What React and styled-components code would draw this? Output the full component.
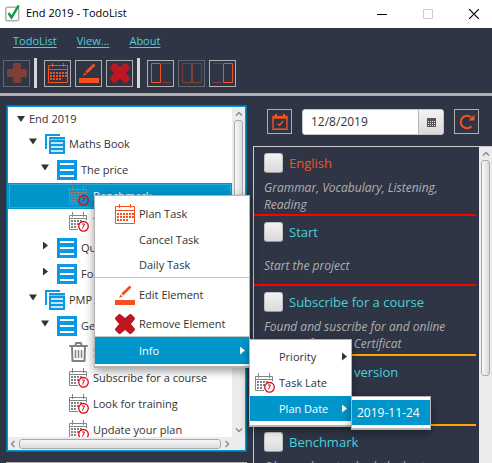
import React from 'react';
import styled, { createGlobalStyle, css } from 'styled-components';

const Global = createGlobalStyle`
  *, *::before, *::after { box-sizing: border-box; }
  body { margin: 0; overflow: hidden; }
  button { font: inherit; color: inherit; padding: 0; border: 0; background: none; }
`;

const navy = '#2f3545';
const blue = '#0096cb';
const cyan = '#48d1dc';
const orange = '#f4511e';
const grey = '#b0b0b0';

const Window = styled.div`
  position: relative;
  display: flex;
  flex-direction: column;
  height: 100vh;
  overflow: hidden;
  background: ${navy};
  color: #333;
  font: 11px/16px "Open Sans", "Noto Sans", sans-serif;
`;

const TitleBar = styled.header`
  display: flex;
  align-items: center;
  flex: none;
  height: 28px;
  padding-left: 4px;
  gap: 5px;
  background: #fff;
  color: #000;
`;

const Title = styled.h1`
  flex: 1;
  margin: 0;
  padding-bottom: 2px;
  font-size: 11px;
  font-weight: 400;
`;

const WindowButton = styled.button`
  display: grid;
  place-items: center;
  width: 41px;
  height: 24px;
  color: ${(p) => (p.disabled ? '#ccc' : '#000')};
  &:last-child { margin-right: -2px; }
`;

const MenuBar = styled.nav`
  display: flex;
  flex: none;
  align-items: center;
  gap: 20px;
  height: 26px;
  padding: 0 13px;
`;

const MenuLink = styled.a`
  color: ${cyan};
  text-underline-offset: 2px;
`;

const ToolBar = styled.div`
  display: flex;
  flex: none;
  align-items: center;
  gap: 4px;
  height: 42px;
  padding: 2px 3px 3px;
  border-bottom: 3px solid ${grey};
`;

const Divider = styled.span`
  width: 3px;
  height: 30px;
  margin-right: 3px;
  background: #d6d6d6;
`;

const IconButton = styled.button`
  display: grid;
  place-items: center;
  flex: none;
  width: ${(p) => p.$size || 27}px;
  height: ${(p) => p.$size || 27}px;
  border: 1px solid ${grey};
  &:disabled { opacity: 0.4; }
`;

const Body = styled.main`
  display: grid;
  grid-template-columns: minmax(0, 241fr) minmax(0, 239fr);
  column-gap: 6px;
  flex: 1;
  min-height: 0;
  padding: 9px 0 0 6px;
`;

const Left = styled.section`
  display: flex;
  flex-direction: column;
  gap: 10px;
  min-height: 0;
`;

const TreePanel = styled.div`
  display: grid;
  grid-template: minmax(0, 1fr) 13px / minmax(0, 1fr) 13px;
  flex: 1;
  min-height: 0;
  border: 1px solid ${blue};
  outline: 1px solid #0074a0;
  outline-offset: -1px;
  background: #fff;
  box-shadow: inset 0 0 0 1px #0396d8;
  padding: 1px;
`;

const DetailPanel = styled.div`
  flex: none;
  height: 1px;
  background: ${grey};
`;

const Tree = styled.ul`
  margin: 0;
  padding: 0;
  overflow: hidden;
  list-style: none;
`;

const TreeRow = styled.li`
  display: flex;
  align-items: center;
  gap: 4px;
  height: ${(p) => (p.$depth ? 26 : 24)}px;
  padding-left: ${(p) => 9 + p.$depth * 12}px;
  white-space: nowrap;
  ${(p) => p.$selected && css`
    background: ${blue};
    color: #fff;
    box-shadow: inset 0 0 0 1px #0096cb, inset 0 0 0 2px #2aa7d4;
  `}
`;

const Arrow = styled.span`
  width: 8px;
  height: 8px;
  margin-right: ${(p) => (p.$flush ? 0 : 4)}px;
  margin-bottom: ${(p) => (p.$flush ? 0 : 5)}px;
  background: ${(p) => (p.$hidden ? 'transparent' : 'currentColor')};
  clip-path: ${(p) => (p.$open ? 'polygon(0 12%, 100% 12%, 50% 88%)' : 'polygon(25% 0, 88% 50%, 25% 100%)')};
`;

const ScrollBar = styled.div`
  display: flex;
  flex-direction: ${(p) => (p.$horizontal ? 'row' : 'column')};
  align-items: center;
  gap: 2px;
  min-width: 0;
  min-height: 0;
  padding: ${(p) => (p.$horizontal ? '0 1px' : '3px 0')};
  background: #ececec;
  color: #888;
`;

const Thumb = styled.span`
  flex: ${(p) => p.$grow || 1};
  width: ${(p) => (p.$horizontal ? 'auto' : '9px')};
  height: ${(p) => (p.$horizontal ? '10px' : 'auto')};
  border: 1px solid #aaa;
  border-radius: 3px;
  background: linear-gradient(${(p) => (p.$horizontal ? '180deg' : '90deg')}, #f8f8f8, #dcdcdc);
`;

const Rest = styled.span`
  flex: ${(p) => p.$grow};
`;

const Corner = styled.span`
  background: #ececec;
`;

const Right = styled.section`
  display: flex;
  flex-direction: column;
  min-height: 0;
`;

const DateBar = styled.form`
  display: flex;
  flex: none;
  gap: 10px;
  height: 41px;
  padding: 4px 13px 0 14px;
`;

const DateField = styled.div`
  display: flex;
  flex: 1;
  min-width: 0;
  height: 26px;
  border: 1px solid #c4c4c4;
  border-radius: 3px;
  background: #fff;
  overflow: hidden;
`;

const DateInput = styled.input`
  flex: 1;
  min-width: 0;
  padding: 0 8px 1px;
  border: 0;
  outline: 0;
  background: none;
  color: #333;
  font: inherit;
  font-size: 12px;
`;

const DateButton = styled.button`
  display: grid;
  place-items: center;
  width: 25px;
  border-left: 1px solid #b5b5b5;
  background: linear-gradient(#f3f3f3, #dadada);
`;

const TaskPanel = styled.div`
  display: grid;
  grid-template-columns: minmax(0, 1fr) 13px;
  flex: 1;
  min-height: 0;
  border: solid #c8c8c8;
  border-width: 1px 0 0 1px;
`;

const Tasks = styled.ul`
  margin: 0;
  padding: 0 3px 0 0;
  overflow: hidden;
  list-style: none;
`;

const Task = styled.li`
  display: flex;
  flex-direction: column;
  height: 70px;
  padding: 6px 10px 0;
  border-bottom: 2px solid ${(p) => p.$line};
  &:first-child { height: 69px; }
`;

const TaskLabel = styled.label`
  display: flex;
  align-items: center;
  gap: 6px;
  color: ${(p) => (p.$hot ? orange : cyan)};
  font-size: 13px;
  line-height: 20px;
  white-space: nowrap;
`;

const Check = styled.input`
  appearance: none;
  flex: none;
  width: 19px;
  height: 20px;
  margin: 0;
  border: 1px solid #c2c2c2;
  border-bottom-color: #999;
  border-radius: 3px;
  background: linear-gradient(#f2f2f2, #dadada);
`;

const TaskText = styled.p`
  display: flex;
  align-items: center;
  flex: 1;
  margin: 0;
  padding-top: 4px;
  color: #b0b0b0;
  font-size: 12px;
  font-style: italic;
  line-height: 17px;
  white-space: pre-line;
`;

const Popup = styled.div`
  position: absolute;
  left: ${(p) => p.$x}px;
  top: ${(p) => p.$y}px;
  width: ${(p) => p.$w}px;
  padding: ${(p) => p.$pad || '4px 0'};
  border: 1px solid #b4b4b4;
  border-bottom-width: 2px;
  background: #fff;
  box-shadow: 0 3px 9px rgba(0, 0, 0, 0.4);
`;

const PopupItem = styled.button`
  display: grid;
  grid-template-columns: ${(p) => (p.$plain ? '1fr' : '20px 1fr 8px')};
  align-items: center;
  column-gap: 4px;
  width: 100%;
  height: ${(p) => p.$h || 25}px;
  padding: 0 3px 0 ${(p) => p.$inset}px;
  background: ${(p) => (p.$active ? blue : 'transparent')};
  color: ${(p) => (p.$active ? '#fff' : '#333')};
  font-size: ${(p) => (p.$plain ? 12 : 11)}px;
  text-align: left;
  white-space: nowrap;
`;

const Rule = styled.hr`
  margin: 0;
  height: 1px;
  border: 0;
  background: #c4c4c4;
`;

const days = [];
for (let r = 0; r < 3; r++) {
  for (let c = 0; c < 6; c++) {
    if (r < 2 || c < 4) days.push([2 + c * 3, 9 + r * 3]);
  }
}

const Calendar = ({ color = orange }) => (
  <svg width="20" height="20" viewBox="0 0 20 20" fill="none" stroke={color}>
    <path d="M.5 2.5h19v17H.5zM.5 6.5h19M4.5 0v4M15.5 0v4" />
    {days.map(([x, y]) => <rect key={`${x}-${y}`} x={x} y={y} width="2" height="2" fill={color} stroke="none" />)}
  </svg>
);

const LateCalendar = () => (
  <svg width="20" height="20" viewBox="0 0 20 20" fill="none" stroke="#858585">
    <path d="M9 17.5H.5v-14h17v5M.5 6.5h17M3.5 0v5M14.5 0v5" />
    {days.filter(([x, y]) => x + y < 23).map(([x, y]) => (
      <rect key={`${x}-${y}`} x={x} y={y - 1} width="2" height="2" fill="#858585" stroke="none" />
    ))}
    <circle cx="14.5" cy="14.3" r="4.8" stroke="#e30613" strokeWidth="1.3" />
    <path d="M13 12h2.5l-2 4.5" stroke="#e30613" />
  </svg>
);

const Pencil = () => (
  <svg width="20" height="20" viewBox="0 0 20 20" fill={orange}>
    <path d="M0 15h20v5H0zM14.5.4l2 2-8.2 8.2-2-2zM5.7 9.5l1.9 1.9L4 13z" />
  </svg>
);

const Cross = () => (
  <svg width="20" height="20" viewBox="0 0 20 20" fill="#be1622">
    <path d="M4.500 1.500L10 6l5.500-4.500 3 3L14 10l4.500 5.500-3 3L10 14l-5.500 4.500-3-3L6 10 1.500 4.500z" stroke="#be1622" strokeWidth="3" strokeLinejoin="round" />
  </svg>
);

const Plus = () => (
  <svg width="20" height="20" viewBox="0 0 20 20" fill={orange}>
    <path d="M7 0h6l1 1v5h5l1 1v6l-1 1h-5v5l-1 1H7l-1-1v-5H1l-1-1V7l1-1h5V1z" />
  </svg>
);

const Panes = ({ side }) => (
  <svg width="22" height="20" viewBox="0 0 22 20" fill="none" stroke={orange}>
    {side === 'left' && <><path d="M1.5.5h9v19h-9z" /><path d="M12 .5h9M12 19.5h9" opacity=".4" /></>}
    {side === 'both' && <path d="M1.5.5h9v19h-9zM11.5.5h9v19h-9z" />}
    {side === 'right' && <><path d="M11.5.5h9v19h-9z" /><path d="M1 .5h9M1 19.5h9" opacity=".4" /></>}
  </svg>
);

const Page = () => (
  <svg width="20" height="20" viewBox="0 0 20 20">
    <path d="M0 0h20v20H0z" fill="#0a9ae5" />
    <path d="M3 4h14M3 10h14M3 16h14" stroke="#fff" strokeWidth="2" />
  </svg>
);

const Book = () => (
  <svg width="20" height="20" viewBox="0 0 20 20">
    <path d="M0 0h15v2H2v13H0zM4 3h16v17H4z" fill="#0a9ae5" />
    <path d="M4 5.5h16" stroke="#7cc8f0" />
    <path d="M6 9h12M6 13h12M6 17h12" stroke="#fff" strokeWidth="1.4" />
  </svg>
);

const Bin = () => (
  <svg width="20" height="20" viewBox="0 0 20 20" fill="none" stroke="#808080" strokeWidth="2" strokeLinecap="round" strokeLinejoin="round">
    <path d="M1 4h17M6.5 3.5L7 1h5l.5 2.5M3 4.5L3.5 19h12L16 4.5" />
    <path d="M6.5 8.5v7M9.5 8.5v7M12.5 8.5v7" strokeWidth="1.5" />
  </svg>
);

const Chevron = ({ d }) => (
  <svg width="8" height="8" viewBox="0 0 8 8" fill="none" stroke="currentColor" strokeWidth="1.4"><path d={d} /></svg>
);
const UP = 'M1 5.5l3-3 3 3';
const DOWN = 'M1 2.5l3 3 3-3';
const LEFT = 'M5.5 1l-3 3 3 3';
const RIGHT = 'M2.5 1l3 3-3 3';

const icons = { book: Book, page: Page, late: LateCalendar, bin: Bin };

const rows = [
  { depth: 0, open: true, text: 'End 2019' },
  { depth: 1, open: true, icon: 'book', text: 'Maths Book' },
  { depth: 2, open: true, icon: 'page', text: 'The price' },
  { depth: 3, leaf: true, icon: 'late', text: 'Benchmark', selected: true },
  { depth: 3, leaf: true, icon: 'late', text: 'Test' },
  { depth: 2, icon: 'page', text: 'Questions' },
  { depth: 2, icon: 'page', text: 'Formulas' },
  { depth: 1, open: true, icon: 'book', text: 'PMP' },
  { depth: 2, open: true, icon: 'page', text: 'General' },
  { depth: 3, leaf: true, icon: 'bin', text: 'Start' },
  { depth: 3, leaf: true, icon: 'late', text: 'Subscribe for a course' },
  { depth: 3, leaf: true, icon: 'late', text: 'Look for training' },
  { depth: 3, leaf: true, icon: 'late', text: 'Update your plan' },
];

const tasks = [
  { title: 'English', text: 'Grammar, Vocabulary, Listening,\nReading', line: '#f00', hot: true },
  { title: 'Start', text: 'Start the project', line: '#f00' },
  { title: 'Subscribe for a course', text: 'Found and suscribe for and online\ntraining for PMP Certificat', line: '#ffa500' },
  { title: 'Download version', text: '', line: '#ffa500' },
  { title: 'Benchmark', text: 'Observe how to check the best\nprice', line: '#ffa500' },
];

export default function App() {
  return (
    <Window>
      <Global />
      <TitleBar>
        <svg width="17" height="18" viewBox="0 0 17 18" fill="none">
          <rect x="1.7" y="2.2" width="13" height="13.5" rx="2" stroke="#b0b0b0" strokeWidth="1.5" />
          <path d="M4.5 8l3 4.5L14.7.5" stroke="#0a9a4a" strokeWidth="2.4" />
        </svg>
        <Title>End 2019 - TodoList</Title>
        <WindowButton aria-label="Minimize"><svg width="10" height="10" stroke="currentColor"><path d="M0 5.5h10" /></svg></WindowButton>
        <WindowButton aria-label="Maximize" disabled><svg width="10" height="10" fill="none" stroke="currentColor"><path d="M.5.5h9v9h-9z" /></svg></WindowButton>
        <WindowButton aria-label="Close"><svg width="10" height="10" stroke="currentColor" strokeWidth="1.2"><path d="M0 0l10 10M10 0L0 10" /></svg></WindowButton>
      </TitleBar>
      <MenuBar>
        <MenuLink href="#todolist">TodoList</MenuLink>
        <MenuLink href="#view">View...</MenuLink>
        <MenuLink href="#about">About</MenuLink>
      </MenuBar>
      <ToolBar>
        <IconButton aria-label="Add" disabled><Plus /></IconButton>
        <Divider />
        <IconButton aria-label="Plan"><Calendar /></IconButton>
        <IconButton aria-label="Edit"><Pencil /></IconButton>
        <IconButton aria-label="Remove"><Cross /></IconButton>
        <Divider />
        <IconButton aria-label="Show left pane"><Panes side="left" /></IconButton>
        <IconButton aria-label="Show both panes" disabled><Panes side="both" /></IconButton>
        <IconButton aria-label="Show right pane"><Panes side="right" /></IconButton>
      </ToolBar>
      <Body>
        <Left>
          <TreePanel>
            <Tree role="tree">
              {rows.map((r) => {
                const Icon = icons[r.icon];
                return (
                  <TreeRow key={r.text} role="treeitem" aria-selected={!!r.selected} $depth={r.depth} $selected={r.selected}>
                    <Arrow $open={r.open} $hidden={r.leaf} $flush={!r.depth} />
                    {Icon && <Icon />}
                    {r.text}
                  </TreeRow>
                );
              })}
            </Tree>
            <ScrollBar><Chevron d={UP} /><Thumb $grow={3} /><Rest $grow={1} /><Chevron d={DOWN} /></ScrollBar>
            <ScrollBar $horizontal><Chevron d={LEFT} /><Thumb $horizontal /><Chevron d={RIGHT} /></ScrollBar>
            <Corner />
          </TreePanel>
          <DetailPanel />
        </Left>
        <Right>
          <DateBar>
            <IconButton type="button" $size={25} aria-label="Today">
              <svg width="16" height="16" viewBox="0 0 16 16" fill="none" stroke={orange} strokeWidth="1.4">
                <path d="M1 2.5h14v12.8H1zM1 4h14" /><path d="M4 0v3M12 0v3" strokeWidth="2" /><path d="M5.5 9.5l2 2L11 7" />
              </svg>
            </IconButton>
            <DateField>
              <DateInput aria-label="Date" defaultValue="12/8/2019" />
              <DateButton type="button" aria-label="Open calendar">
                <svg width="9" height="9" viewBox="0 0 9 9"><path d="M0 0h9v9H0z" fill="#555" /><path d="M1 3.5h7M1 5.5h7M1 7.5h7" stroke="#ddd" strokeDasharray="1 1" /></svg>
              </DateButton>
            </DateField>
            <IconButton type="button" $size={25} aria-label="Refresh">
              <svg width="16" height="16" viewBox="0 0 16 16" fill="none" stroke={orange} strokeWidth="2">
                <path d="M12.5 12.3A6.2 6.2 0 1 1 12.3 3.6" /><path d="M15.5.5v6h-6z" fill={orange} stroke="none" />
              </svg>
            </IconButton>
          </DateBar>
          <TaskPanel>
            <Tasks>
              {tasks.map((t) => (
                <Task key={t.title} $line={t.line}>
                  <TaskLabel $hot={t.hot}><Check type="checkbox" />{t.title}</TaskLabel>
                  <TaskText>{t.text}</TaskText>
                </Task>
              ))}
            </Tasks>
            <ScrollBar><Chevron d={UP} /><Thumb $grow={220} /><Rest $grow={84} /></ScrollBar>
          </TaskPanel>
        </Right>
      </Body>
      <Popup role="menu" $x={94} $y={195} $w={156} $pad="5px 0 2px">
        <PopupItem role="menuitem" $inset={20} $h={26}><Calendar />Plan Task</PopupItem>
        <PopupItem role="menuitem" $inset={20}><span />Cancel Task</PopupItem>
        <PopupItem role="menuitem" $inset={20}><span />Daily Task</PopupItem>
        <Rule />
        <PopupItem role="menuitem" $inset={20} $h={34}><Pencil />Edit Element</PopupItem>
        <PopupItem role="menuitem" $inset={20} $h={24}><Cross />Remove Element</PopupItem>
        <Rule />
        <PopupItem role="menuitem" $inset={20} $h={27} $active><span />Info<Arrow $flush /></PopupItem>
      </Popup>
      <Popup role="menu" $x={249} $y={339} $w={103}>
        <PopupItem role="menuitem" $inset={5}><span />Priority<Arrow $flush /></PopupItem>
        <PopupItem role="menuitem" $inset={5} $h={27}><LateCalendar />Task Late</PopupItem>
        <PopupItem role="menuitem" $inset={5} $active><span />Plan Date<Arrow $flush /></PopupItem>
      </Popup>
      <Popup role="menu" $x={351} $y={396} $w={80} $pad="3px 0">
        <PopupItem role="menuitem" $inset={5} $plain $active>2019-11-24</PopupItem>
      </Popup>
    </Window>
  );
}
